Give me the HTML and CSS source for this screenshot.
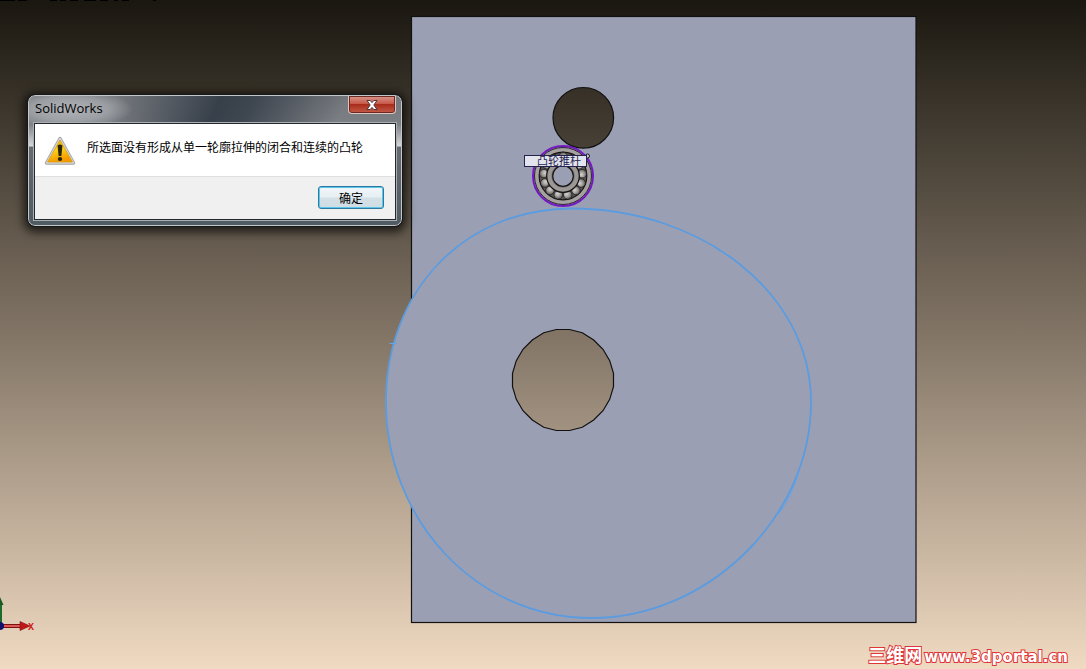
FILE: index.html
```html
<!DOCTYPE html>
<html lang="zh-CN">
<head>
    <meta charset="UTF-8">
    <meta name="viewport" content="width=device-width, initial-scale=1.0">
    <title>SolidWorks</title>
    <link rel="stylesheet" href="styles.css">
</head>
<body>
    <main class="viewport">
        <svg class="scene" viewBox="0 0 1086 669" preserveAspectRatio="xMinYMin slice">
            <defs>
                <linearGradient id="backdrop" gradientUnits="userSpaceOnUse" x1="0" y1="0" x2="0" y2="669">
                    <stop offset="0" stop-color="#1a1710"/>
                    <stop offset="0.5" stop-color="#827566"/>
                    <stop offset="1" stop-color="#f0dac2"/>
                </linearGradient>
                <radialGradient id="steel" cx="0.4" cy="0.35" r="0.7">
                    <stop offset="0" stop-color="#d6d4d2"/>
                    <stop offset="0.5" stop-color="#a09d9a"/>
                    <stop offset="1" stop-color="#4e4b49"/>
                </radialGradient>
                <circle id="ball" cx="563" cy="195.5" r="4.3" fill="url(#steel)" stroke="#1c1a1a" stroke-width="0.7"/>
            </defs>
            <rect width="1086" height="669" fill="url(#backdrop)"/>
            <path class="residue" d="M0 0.5h15M18 0.5h9M50 0.5h7M60 0.5h6M70 0.5h8M84 0.5h12M100 0.5h8M114 0.5h4M122 0.5h7M153 0.5h3"/>

            <!-- plate -->
            <rect class="edge plate" x="411.5" y="16.5" width="504.5" height="606"/>
            <circle class="edge" cx="583.3" cy="117.8" r="30.3" fill="url(#backdrop)"/>

            <!-- cam -->
            <path class="cam" d="M572 208.5C700 208.5 811 292 811 402C811 520 705 618 592 618C476 618 386 520 386 402C386 290 465 208.5 572 208.5Z"/>
            <path class="cam-mark" d="M389.500 343.500h7M778 515q14-19 21-43M432 271l4-4M758 540l3-4"/>
            <path class="edge" fill="url(#backdrop)" d="M613.500 373.400V386.600L609.700 399.300L603 410.700L593.700 420L582.300 427.300L569.600 430.500H556.400L543.700 427.300L532.300 420L523 410.700L516.300 399.300L512.500 386.600V373.400L516.300 360.700L523 349.300L532.300 340L543.700 332.700L556.400 329.500H569.600L582.300 332.700L593.700 340L603 349.300L609.700 360.700Z"/>

            <!-- bearing -->
            <circle cx="563" cy="176" r="30" fill="#a5a19f" stroke="#7417c4" stroke-width="2"/>
            <circle cx="563" cy="176" r="28.500" fill="none" stroke="#2c2138"/>
            <circle cx="563" cy="176" r="23.800" fill="#5a5654" stroke="#161414" stroke-width="1.200"/>
            <g>
                <use href="#ball" transform="rotate(14 563 176)"/>
                <use href="#ball" transform="rotate(42 563 176)"/>
                <use href="#ball" transform="rotate(69 563 176)"/>
                <use href="#ball" transform="rotate(97 563 176)"/>
                <use href="#ball" transform="rotate(125 563 176)"/>
                <use href="#ball" transform="rotate(152 563 176)"/>
                <use href="#ball" transform="rotate(180 563 176)"/>
                <use href="#ball" transform="rotate(208 563 176)"/>
                <use href="#ball" transform="rotate(235 563 176)"/>
                <use href="#ball" transform="rotate(263 563 176)"/>
                <use href="#ball" transform="rotate(291 563 176)"/>
                <use href="#ball" transform="rotate(318 563 176)"/>
                <use href="#ball" transform="rotate(346 563 176)"/>
            </g>
            <circle cx="563" cy="176" r="16.300" fill="#9c9896" stroke="#161414" stroke-width="1.200"/>
            <circle cx="563" cy="176" r="11.300" fill="none" stroke="#77736f"/>
            <circle cx="563" cy="176" r="10.300" fill="#9b9fb3" stroke="#161414" stroke-width="1.200"/>

            <!-- callout -->
            <circle cx="587.500" cy="156" r="2" fill="#c9cbd8" stroke="#1a1a22"/>
            <rect x="524.500" y="155.500" width="62" height="11" fill="#e3e4ee" stroke="#23234d"/>
            <text class="callout-text" x="537" y="165">凸轮推杆</text>

            <!-- triad -->
            <path d="M0.500 602V626" stroke="#1d6b2b" stroke-width="3"/>
            <path d="M0 597L3.500 605H0Z" fill="#155c20"/>
            <path d="M2 626H22" stroke="#7c1010" stroke-width="4"/>
            <path d="M2 626H22" stroke="#dd5a55" stroke-width="2"/>
            <path d="M20 621.500L30 626L20 630.500Z" fill="#c3161a" stroke="#7c1010" stroke-width="0.600"/>
            <circle cx="0" cy="626" r="4" fill="#12126e"/>
            <text class="axis-text" x="28" y="630">X</text>
        </svg>

        <section class="dialog" role="alertdialog" aria-labelledby="dialog-title" aria-describedby="dialog-message">
            <header class="titlebar">
                <h1 class="title" id="dialog-title">SolidWorks</h1>
                <button class="close" type="button" aria-label="关闭">
                    <svg width="14" height="12" viewBox="0 0 14 12">
                        <path d="M2 1.500H5.200L7 3.600L8.800 1.500H12L8.800 6L12 10.500H8.800L7 8.400L5.200 10.500H2L5.200 6Z" fill="#fff" stroke="#4a3a40"/>
                    </svg>
                </button>
            </header>
            <div class="content">
                <div class="message">
                    <svg class="warning" width="32" height="30" viewBox="0 0 32 30">
                        <defs>
                            <linearGradient id="amber" x1="0" y1="0" x2="0.3" y2="1">
                                <stop offset="0" stop-color="#e2a100"/>
                                <stop offset="0.5" stop-color="#fbd21b"/>
                                <stop offset="1" stop-color="#f59a00"/>
                            </linearGradient>
                        </defs>
                        <path d="M16 2.500L29.500 27H2.500Z" fill="#b5b6ba" stroke="#a0a1a6" stroke-width="3.400" stroke-linejoin="round"/>
                        <path d="M16 2.500L29.500 27H2.500Z" fill="#c9c9cc" stroke="#d5d5d8" stroke-width="1.600" stroke-linejoin="round"/>
                        <path d="M16 4L28.500 26H3.500Z" fill="url(#amber)" stroke="#d99b08" stroke-width="0.700"/>
                        <path d="M13.600 9.500Q16 7.500 18.400 9.500L17.400 20H14.600Z" fill="#2a2508"/>
                        <ellipse cx="16" cy="23" rx="2.200" ry="1.900" fill="#2a2508"/>
                    </svg>
                    <p class="message-text" id="dialog-message">所选面没有形成从单一轮廓拉伸的闭合和连续的凸轮</p>
                </div>
                <footer class="actions">
                    <button class="confirm" type="button">确定</button>
                </footer>
            </div>
        </section>

        <a class="watermark" href="#"><span class="site-name">三维网</span>www.3dportal.cn</a>
    </main>
</body>
</html>
```
FILE: styles.css
```css
* {
    box-sizing: border-box;
}
body {
    margin: 0;
    background: #1a1710;
    font-family: "Open Sans", "Noto Sans CJK SC", sans-serif;
    font-size: 12px;
    color: #000;
}
.viewport {
    position: relative;
    min-height: 100vh;
    overflow: hidden;
}
.scene {
    display: block;
    width: 100%;
    height: 100vh;
}
.residue {
    stroke: #000;
    stroke-width: 1;
}
.edge {
    stroke: #111;
    stroke-width: 1.2;
}
.plate {
    fill: #9b9fb3;
}
.cam {
    fill: #9b9fb3;
    stroke: #5b9ce0;
    stroke-width: 1.8;
}
.cam-mark {
    fill: none;
    stroke: #62a4ea;
    stroke-width: 1;
}
.callout-text {
    font-family: "Noto Sans CJK SC", sans-serif;
    font-size: 11px;
    fill: #23234d;
}
.axis-text {
    font-family: "Liberation Mono", monospace;
    font-size: 10px;
    font-weight: 700;
    fill: #d21c1c;
}

/* message box */
.dialog {
    position: absolute;
    top: 95px;
    left: 28px;
    width: 374px;
    padding: 0 5px 5px;
    border: 1px solid #c3c7ca;
    border-radius: 7px;
    outline: 1px solid #15171a;
    background:
        radial-gradient(ellipse 64px 20px at 40px 13px, rgba(190, 193, 197, 0.8), rgba(190, 193, 197, 0.5) 60%, rgba(190, 193, 197, 0) 100%),
        linear-gradient(115deg, rgba(48, 57, 68, 0) 80px, rgba(48, 57, 68, 0.9) 175px, rgba(48, 57, 68, 0.8) 205px, rgba(48, 57, 68, 0) 290px) 0 0 / 100% 28px no-repeat,
        linear-gradient(#74777c, #7c7f84 28px, #d6d8da 50px, #666b70 51px, #4f5b62);
    box-shadow: 0 2px 10px 4px rgba(0, 0, 0, 0.7);
}
.titlebar {
    display: flex;
    justify-content: space-between;
    align-items: flex-start;
    height: 27px;
}
.title {
    margin: 0;
    padding-left: 1px;
    font-size: 13px;
    font-weight: 400;
    line-height: 24px;
}
.close {
    display: flex;
    justify-content: center;
    align-items: center;
    width: 48px;
    height: 18px;
    padding: 0;
    border: 1px solid #e0c4c0;
    border-top: 0;
    border-radius: 0 0 4px 4px;
    background: linear-gradient(#d9998d, #c8594a 45%, #a92c1c 50%, #c55d48);
    box-shadow: inset 0 0 0 1px #6b2a24;
}
.content {
    border: 1px solid #23282d;
    outline: 1px solid #a9afb4;
    background: #f0f0f0;
}
.message {
    display: flex;
    align-items: flex-start;
    gap: 11px;
    height: 53px;
    padding: 12px 9px 0;
    border-bottom: 1px solid #dfdfdf;
    background: #fff;
}
.message-text {
    margin: 0;
    line-height: 24px;
    white-space: nowrap;
}
.actions {
    display: flex;
    justify-content: flex-end;
    padding: 9px 11px 10px;
}
.confirm {
    width: 66px;
    height: 23px;
    padding: 0;
    border: 1px solid #2c7a9e;
    border-radius: 3px;
    background: linear-gradient(#f1f6f8, #e6eff3 48%, #d3e0e6 52%, #cfdde4);
    box-shadow: inset 0 0 0 1px #5cc5ea;
    font: inherit;
}

.watermark {
    position: absolute;
    right: 18px;
    bottom: 2px;
    font-family: "DejaVu Sans", "Noto Sans CJK SC", sans-serif;
    font-size: 15px;
    font-weight: 700;
    line-height: 20px;
    color: #fff;
    text-decoration: none;
    -webkit-text-stroke: 2px #df3538;
    paint-order: stroke fill;
}
.site-name {
    margin-right: 2px;
    font-size: 18px;
}
```
